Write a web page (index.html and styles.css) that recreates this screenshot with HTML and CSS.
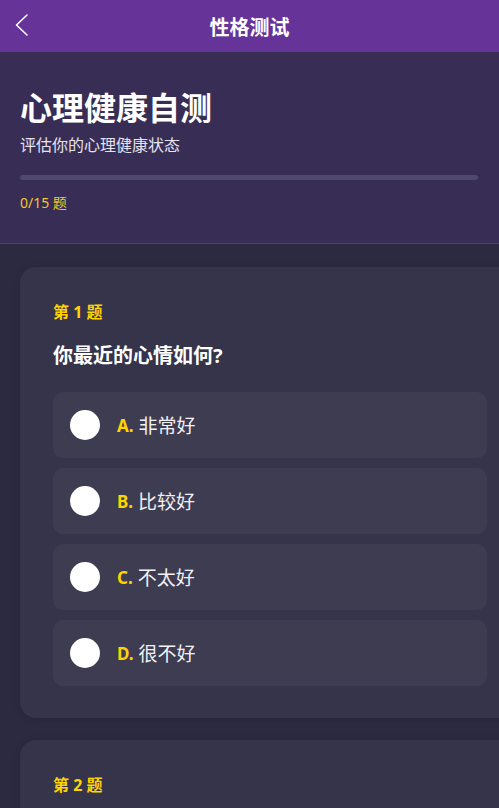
FILE: index.html
```html
<!DOCTYPE html>
<html lang="zh">
<head>
<meta charset="utf-8">
<link rel="stylesheet" href="styles.css">
</head>
<body>
<div class="page">
  <header class="topbar">
    <svg class="back" width="16" height="24" viewBox="0 0 16 24"><path d="M14 2 L3.5 12 L14 22" fill="none" stroke="#fff" stroke-width="1.6" stroke-linecap="round" stroke-linejoin="round"/></svg>
    <div class="topbar-title">性格测试</div>
  </header>
  <section class="hero">
    <h1 class="hero-title">心理健康自测</h1>
    <p class="hero-sub">评估你的心理健康状态</p>
    <div class="progress"><div class="progress-fill" style="width:0%"></div></div>
    <div class="progress-text">0/15 题</div>
  </section>
  <main class="list">
    <div class="card">
      <div class="q-num">第 1 题</div>
      <div class="q-text">你最近的心情如何?</div>
      <div class="options">
        <div class="option"><span class="radio"></span><span class="opt-key">A.</span><span class="opt-label">非常好</span></div>
        <div class="option"><span class="radio"></span><span class="opt-key">B.</span><span class="opt-label">比较好</span></div>
        <div class="option"><span class="radio"></span><span class="opt-key">C.</span><span class="opt-label">不太好</span></div>
        <div class="option"><span class="radio"></span><span class="opt-key">D.</span><span class="opt-label">很不好</span></div>
      </div>
    </div>
    <div class="card">
      <div class="q-num">第 2 题</div>
    </div>
  </main>
</div>
</body>
</html>
```
FILE: styles.css
```css
html, body {
  margin: 0;
  padding: 0;
}
body {
  background: #2c2a40;
  font-family: "Noto Sans", "Noto Sans CJK SC", sans-serif;
  color: #fff;
  width: 499px;
  height: 808px;
  overflow: hidden;
}
.page {
  width: 499px;
}
.topbar {
  height: 52px;
  background: #663399;
  display: flex;
  align-items: center;
  justify-content: center;
  position: relative;
}
.back {
  position: absolute;
  left: 13px;
  top: 13px;
}
.topbar-title {
  font-size: 20px;
  font-weight: 700;
}
.hero {
  background: #372d55;
  padding: 34px 21px 30px 20px;
  border-bottom: 1px solid #4a4468;
}
.hero-title {
  margin: 0;
  font-size: 32px;
  font-weight: 700;
  line-height: 44px;
}
.hero-sub {
  margin: 4px 0 0;
  font-size: 16px;
  line-height: 22px;
  color: #e6e2ee;
}
.progress {
  margin-top: 19px;
  height: 5px;
  border-radius: 3px;
  background: #4f4870;
}
.progress-fill {
  height: 100%;
  background: #ffd400;
}
.progress-text {
  margin-top: 13px;
  font-size: 14px;
  line-height: 20px;
  color: #f2c62e;
}
.list {
  padding: 23px 0 0 20px;
  display: flex;
  flex-direction: column;
  gap: 22px;
}
.card {
  width: 500px;
  box-sizing: border-box;
  background: #36344a;
  border-radius: 16px;
  padding: 34px 0 32px 33px;
  box-shadow: 0 2px 8px rgba(0,0,0,0.12);
}
.q-num {
  font-size: 16px;
  font-weight: 700;
  color: #ffd400;
  line-height: 22px;
}
.q-text {
  margin-top: 19px;
  font-size: 20px;
  font-weight: 700;
  line-height: 28px;
}
.options {
  margin-top: 22px;
  display: flex;
  flex-direction: column;
  gap: 10px;
  width: 434px;
}
.option {
  height: 66px;
  background: #3e3c51;
  border-radius: 10px;
  display: flex;
  align-items: center;
  padding-left: 17px;
}
.radio {
  width: 30px;
  height: 30px;
  border-radius: 50%;
  background: #fff;
  margin-right: 17px;
}
.opt-key {
  font-size: 17px;
  font-weight: 700;
  color: #ffd400;
  margin-right: 5px;
}
.opt-label {
  font-size: 19px;
  color: #f1f1f5;
}
```
